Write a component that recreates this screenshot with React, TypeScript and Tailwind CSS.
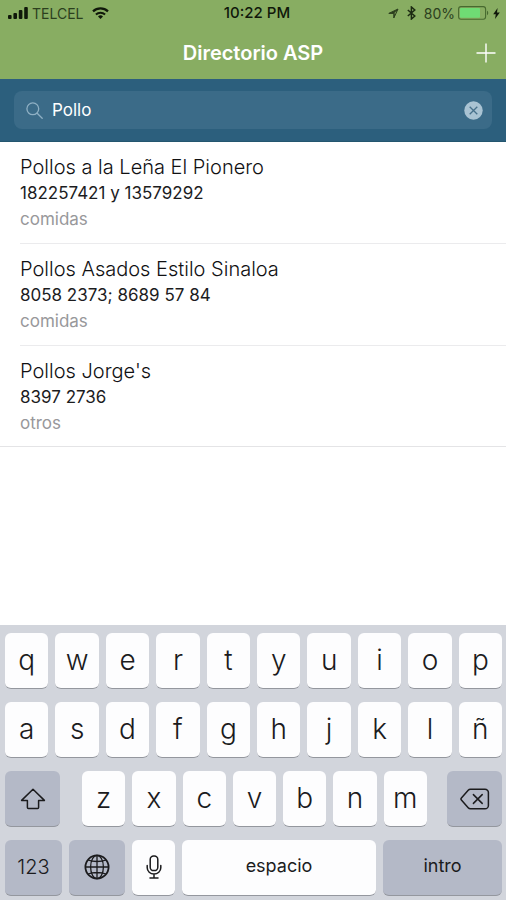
import { useState, type ReactNode } from "react";
import clsx from "clsx";

type Contact = { name: string; phone: string; category: string };

const contacts: Contact[] = [
  { name: "Pollos a la Leña El Pionero", phone: "182257421 y 13579292", category: "comidas" },
  { name: "Pollos Asados Estilo Sinaloa", phone: "8058 2373; 8689 57 84", category: "comidas" },
  { name: "Pollos Jorge's", phone: "8397 2736", category: "otros" },
];

const TOP_ROWS = ["qwertyuiop", "asdfghjklñ"];
const BOTTOM_ROW = "zxcvbnm";

function StatusBar() {
  return (
    <div className="grid h-[26px] grid-cols-[1fr_auto_1fr] items-center px-[6px] text-[14px] text-[#2c3f1e]">
      <div className="flex items-center">
        <svg width="20" height="12" viewBox="0 0 20 12" fill="#10180a" className="mr-1 ml-[2px]" aria-hidden>
          <rect x="0" y="8" width="3.6" height="4" rx="1" />
          <rect x="5.4" y="6" width="3.6" height="6" rx="1" />
          <rect x="10.8" y="3" width="3.6" height="9" rx="1" />
          <rect x="16.2" y="0" width="3.6" height="12" rx="1" />
        </svg>
        <span>TELCEL</span>
        <svg width="17" height="12" viewBox="0 0 17 12" className="ml-2" aria-hidden>
          <path d="M1 4.4a11 11 0 0 1 15 0" fill="none" stroke="#10180a" strokeWidth="2.2" />
          <path d="M3.9 7.5a6.8 6.8 0 0 1 9.2 0" fill="none" stroke="#10180a" strokeWidth="2" />
          <path d="M8.5 12 6 9.5a3.7 3.7 0 0 1 5 0z" fill="#10180a" />
        </svg>
      </div>

      <span className="ml-2 text-[15px] font-medium text-[#10180a]">10:22 PM</span>

      <div className="flex items-center justify-end">
        <svg width="11" height="11" viewBox="0 0 11 11" className="mr-2" aria-hidden>
          <path d="M.8 5.4 10 1 5.8 10V5.4z" fill="#2c3f1e" stroke="#2c3f1e" strokeWidth="1" strokeLinejoin="round" />
          <path d="m6.6 4.8 1.8-1.900-1.600 3.800z" fill="#88ad62" />
        </svg>
        <svg width="9" height="14" viewBox="0 0 9 14" className="mr-2" aria-hidden>
          <path d="m.8 4 7 6-3.4 3V1l3.4 3-7 6" fill="none" stroke="#1c2a12" strokeWidth="1.5" />
        </svg>
        <span>80%</span>
        <svg width="31" height="14" viewBox="0 0 31 14" className="ml-[3px]" aria-hidden>
          <rect x=".6" y=".6" width="27" height="12.6" rx="2.4" fill="none" stroke="#47692f" strokeWidth="1.1" />
          <rect x="2" y="2" width="20" height="9.8" rx="1" fill="#6fdc74" />
          <path d="M29 4.8c1.6.6 1.6 3.8 0 4.4z" fill="#47692f" />
        </svg>
        <svg width="7" height="11" viewBox="0 0 7 11" className="ml-1" aria-hidden>
          <path d="M4.6 0 .2 6.2h2.6L2 11l4.8-6.4H4z" fill="#10180a" />
        </svg>
      </div>
    </div>
  );
}

function Key({
  children,
  dark,
  className = "flex-1 pb-[1px] text-[28px] font-light",
  label,
  onClick,
}: {
  children: ReactNode;
  dark?: boolean;
  className?: string;
  label?: string;
  onClick?: () => void;
}) {
  return (
    <button
      type="button"
      aria-label={label}
      onClick={onClick}
      className={clsx(
        "flex h-14 min-w-0 items-center justify-center rounded-md border-b border-[#94979e] text-[#1b1b1d]",
        dark ? "bg-[#b4b9c7]" : "bg-[#fdfdfe]",
        className,
      )}
    >
      {children}
    </button>
  );
}

function Keyboard({ onType, onDelete }: { onType: (ch: string) => void; onDelete: () => void }) {
  return (
    <div className="mt-auto flex flex-col gap-[13px] bg-[#d2d5dc] pt-2 pr-1 pb-1 pl-[5px]">
      {TOP_ROWS.map((row) => (
        <div key={row} className="flex gap-[7px]">
          {row.split("").map((ch) => (
            <Key key={ch} onClick={() => onType(ch)}>
              {ch}
            </Key>
          ))}
        </div>
      ))}

      <div className="flex">
        <Key dark label="Mayúsculas" className="w-[55px]">
          <svg width="26" height="22" viewBox="0 0 26 22" fill="none" stroke="#1b1b1d" strokeWidth="1.5" strokeLinejoin="round" aria-hidden>
            <path d="M13 1.2 24.4 12.4H18.6V19.6a1 1 0 0 1-1 1H8.4a1 1 0 0 1-1-1V12.4H1.6z" />
          </svg>
        </Key>
        <div className="mr-5 ml-[22px] flex flex-1 gap-[7px]">
          {BOTTOM_ROW.split("").map((ch) => (
            <Key key={ch} onClick={() => onType(ch)}>
              {ch}
            </Key>
          ))}
        </div>
        <Key dark label="Borrar" className="w-[55px]" onClick={onDelete}>
          <svg width="30" height="22" viewBox="0 0 30 22" fill="none" stroke="#1b1b1d" strokeWidth="1.5" strokeLinejoin="round" aria-hidden>
            <path d="M10.4 1.2H25a3.4 3.4 0 0 1 3.4 3.4v12.8a3.4 3.4 0 0 1-3.4 3.4H10.4a3 3 0 0 1-2.2-1L1.4 12a1.5 1.5 0 0 1 0-2l6.8-7.8a3 3 0 0 1 2.2-1z" />
            <path d="m13.4 6.6 8.8 8.8m0-8.8-8.8 8.8" strokeLinecap="round" />
          </svg>
        </Key>
      </div>

      <div className="flex gap-[7px]">
        <Key dark className="w-[57px] pb-[1px] text-[20px] font-light">
          123
        </Key>
        <Key dark label="Idioma" className="w-14 pb-[1px]">
          <svg width="26" height="26" viewBox="0 0 26 26" fill="none" stroke="#1b1b1d" strokeWidth="1.3" aria-hidden>
            <circle cx="13" cy="13" r="11.6" strokeWidth="1.8" />
            <ellipse cx="13" cy="13" rx="6.4" ry="11.6" />
            <path d="M13 1.4v23.2M1.4 13h23.2M4 6c5 2 13 2 18 0M4 20c5-2 13-2 18 0" />
          </svg>
        </Key>
        <Key label="Dictado" className="w-[43px] pb-[1px]">
          <svg width="16" height="24" viewBox="0 0 16 24" fill="none" stroke="#1b1b1d" strokeWidth="1.5" strokeLinecap="round" aria-hidden>
            <rect x="4.2" y="1" width="7.6" height="14.6" rx="3.4" />
            <path d="M1.2 10.4v2.4a6.8 6.2 0 0 0 13.6 0v-2.4M8 19v3.8M4 22.9h8" />
          </svg>
        </Key>
        <Key className="flex-1 pb-1 text-[18px]" onClick={() => onType(" ")}>
          espacio
        </Key>
        <Key dark className="w-[119px] pb-1 text-[18px]">
          intro
        </Key>
      </div>
    </div>
  );
}

export default function App() {
  const [query, setQuery] = useState("Pollo");

  return (
    <div className="flex min-h-screen flex-col bg-white font-['Inter','Liberation_Sans',sans-serif]">
      <header className="bg-[#88ad62]">
        <StatusBar />
        <div className="grid h-[53px] grid-cols-[1fr_auto_1fr] items-center px-[10px]">
          <h1 className="col-start-2 text-[20px] font-semibold text-white">Directorio ASP</h1>
          <button type="button" aria-label="Agregar" className="justify-self-end text-white">
            <svg width="20" height="20" viewBox="0 0 20 20" stroke="currentColor" strokeWidth="1.4" aria-hidden>
              <path d="M10 .5v19M.5 10h19" />
            </svg>
          </button>
        </div>
      </header>

      <div className="border-b border-[#24566f] bg-[#2c5f7d] px-[14px] py-3">
        <label className="flex h-[38px] items-center rounded-lg bg-[#3b6b88] pr-[9px] pl-3">
          <svg width="17" height="17" viewBox="0 0 17 17" fill="none" stroke="#8fb0c4" strokeWidth="1.3" strokeLinecap="round" aria-hidden>
            <circle cx="6.8" cy="6.8" r="5.9" />
            <path d="m11.2 11.2 5 5" />
          </svg>
          <input
            type="text"
            aria-label="Buscar"
            value={query}
            onChange={(e) => setQuery(e.target.value)}
            className="ml-[9px] min-w-0 flex-1 bg-transparent pt-[2px] text-[17px] text-white outline-none"
          />
          <button type="button" aria-label="Borrar texto" onClick={() => setQuery("")}>
            <svg width="19" height="19" viewBox="0 0 19 19" aria-hidden>
              <circle cx="9.5" cy="9.5" r="9.2" fill="#a9c3d3" />
              <path d="m5.7 5.7 7.6 7.6m0-7.6-7.6 7.6" stroke="#47718b" strokeWidth="1.3" />
            </svg>
          </button>
        </label>
      </div>

      <ul className="border-b border-[#e4e4e6]">
        {contacts.map((c) => (
          <li key={c.name} className="group pl-5">
            <div className="border-b border-[#ebebed] pt-3 pb-[11px] group-last:border-b-0 group-last:pb-[10px]">
              <h2 className="text-[20px] leading-[26px] font-light text-[#111113]">{c.name}</h2>
              <p className="text-[17px] leading-[26px] text-[#1c1c1e]">{c.phone}</p>
              <p className="text-[17px] leading-[26px] text-[#98989b]">{c.category}</p>
            </div>
          </li>
        ))}
      </ul>

      <Keyboard onType={(ch) => setQuery((q) => q + ch)} onDelete={() => setQuery((q) => q.slice(0, -1))} />
    </div>
  );
}
